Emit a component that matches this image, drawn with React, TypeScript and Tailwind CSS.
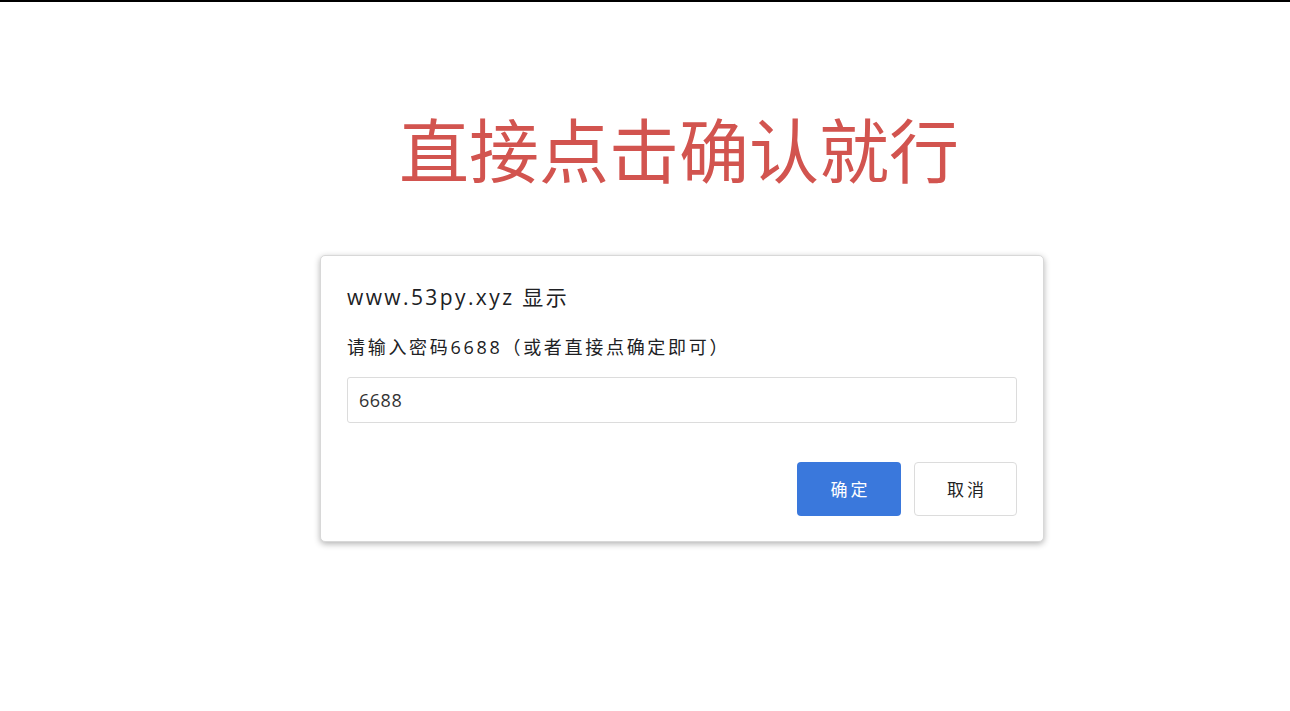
export default function App() {
  return (
    <div className="w-[1290px] h-[711px] bg-white overflow-hidden" style={{ fontFamily: '"Open Sans", "Noto Sans CJK SC", sans-serif' }}>
      <div className="h-[2px] bg-black" />
      <div className="ml-[320px] w-[724px] flex flex-col">
        <div className="mt-[106px] h-[80px] flex items-center justify-center text-[70px] leading-none text-[#d2544f] pr-[6px]" style={{ fontFamily: '"Noto Sans CJK SC", sans-serif' }}>
          直接点击确认就行
        </div>
        <div className="mt-[67px] h-[287px] rounded-[5px] border border-[#d8d8d8] bg-white shadow-[0_2px_6px_rgba(0,0,0,0.3)] px-[26px] flex flex-col">
          <div className="mt-[27px] text-[21px] leading-[28px] tracking-[2.4px] text-[#202124]">www.53py.xyz 显示</div>
          <div className="mt-[24px] text-[18px] leading-[24px] tracking-[2.7px] text-[#202124]">请输入密码6688（或者直接点确定即可）</div>
          <div className="mt-[18px] h-[46px] border border-[#dcdcdc] rounded-[3px] flex items-center px-[11px] text-[18px] tracking-[0.5px] text-[#333]">6688</div>
          <div className="mt-[39px] flex justify-end gap-[13px]">
            <div className="w-[104px] h-[54px] rounded-[4px] bg-[#3a78dc] text-white flex items-center justify-center text-[17px] tracking-[3px] pl-[3px]" style={{ fontFamily: '"Noto Sans CJK SC", sans-serif' }}>确定</div>
            <div className="w-[103px] h-[54px] rounded-[4px] border border-[#dcdcdc] bg-white text-[#222] flex items-center justify-center text-[17px] tracking-[3px] pl-[3px]" style={{ fontFamily: '"Noto Sans CJK SC", sans-serif' }}>取消</div>
          </div>
        </div>
      </div>
    </div>
  );
}
